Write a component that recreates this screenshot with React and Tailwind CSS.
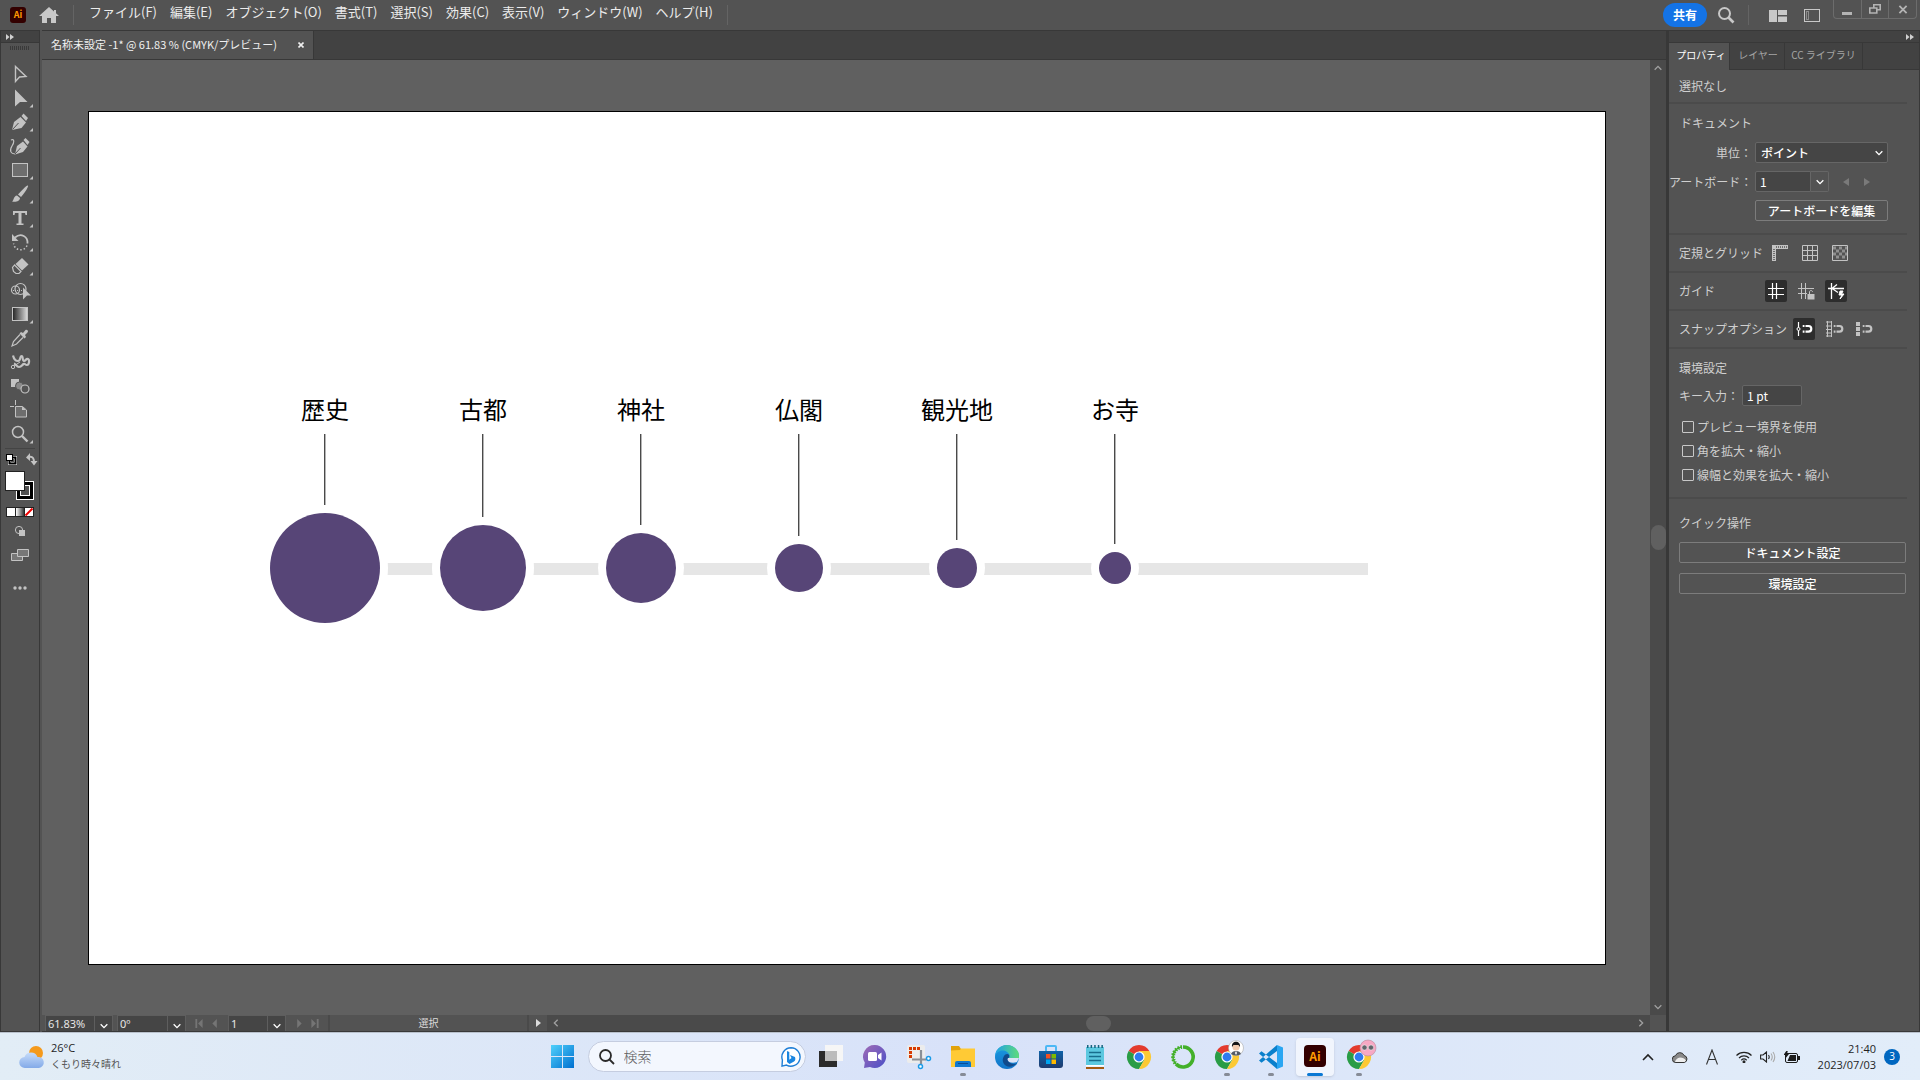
import React, { useState } from 'react';

const menus = [
  'ファイル(F)', '編集(E)', 'オブジェクト(O)', '書式(T)', '選択(S)',
  '効果(C)', '表示(V)', 'ウィンドウ(W)', 'ヘルプ(H)',
];

const nodes = [
  { label: '歴史', stem: 71, size: 110 },
  { label: '古都', stem: 83, size: 86 },
  { label: '神社', stem: 91, size: 70 },
  { label: '仏閣', stem: 102, size: 48 },
  { label: '観光地', stem: 106, size: 40 },
  { label: 'お寺', stem: 110, size: 32 },
];

const G = '#c3c3c3';

// every tool is drawn on a 40x24 cell
const tools = [
  { name: '選択', art: <path d="M15.5 4.5 26 14.5l-6.500.5-4 4.500z" fill="none" stroke={G} strokeWidth="1.400" /> },
  { name: 'ダイレクト選択', more: true, art: <path d="M15 3.500 27.500 16H20l-5 4.500z" fill={G} /> },
  {
    name: 'ペン', more: true, art: (
      <>
        <path d="M12 20 14 12l6.500-5 5.500 5.500-4.500 5.500z" fill={G} />
        <path d="m21.500 6 2-2.500 4.500 4.500-2 3z" fill={G} />
        <path d="m12.500 19.500 6-6.500" stroke="#535353" />
      </>
    ),
  },
  {
    name: '曲線', art: (
      <>
        <path d="M15 20.500 17 12l6-4.500 4.500 5-4.500 5.500z" fill={G} />
        <path d="m23.500 6 2-2 4 4-2 3z" fill={G} />
        <path d="m15 20 5.500-6" stroke="#535353" />
        <path d="M11 6c4-2 3 3 1 6-3 5-1 8 3 8" fill="none" stroke={G} strokeWidth="1.200" />
      </>
    ),
  },
  { name: '長方形', more: true, art: <rect x="12.500" y="5.500" width="15" height="13" fill="#6e6e6e" stroke={G} /> },
  {
    name: 'ブラシ', more: true, art: (
      <>
        <path d="M28 3.500c1 1-4.500 9-7 11.500l-3-2.500c2-2.500 9-10 10-9z" fill={G} />
        <path d="M17 13.500l3 2.500c0 3-4 4.500-8 3.500 2-1 1.500-5.500 5-6z" fill={G} />
      </>
    ),
  },
  { name: '文字', more: true, art: <path d="M13 5h14v4h-1.500l-.5-2h-3.500v10.500h2V19h-7v-1.500h2V7H15l-.5 2H13z" fill={G} /> },
  {
    name: '回転', more: true, art: (
      <>
        <path d="M15 7.500c6-5 13-1 12.500 6" fill="none" stroke={G} strokeWidth="1.800" />
        <path d="M12 4v7h6.500z" fill={G} />
        <path d="M27 15.500c-2 5-9 6-12.500 1l-1-3" fill="none" stroke={G} strokeWidth="1.500" strokeDasharray="1.500 2" />
      </>
    ),
  },
  {
    name: '消しゴム', more: true, art: (
      <>
        <path d="m15.500 10 6.500-6 6.500 6.500-6.500 6z" fill={G} />
        <path d="m14.500 11-2 2.500 1 4 2.500 2h3l2-2z" fill="none" stroke={G} strokeWidth="1.200" />
      </>
    ),
  },
  {
    name: 'シェイプ形成', art: (
      <>
        <circle cx="15.500" cy="12" r="4" fill="none" stroke={G} strokeWidth="1.200" />
        <circle cx="20.500" cy="11" r="5.500" fill="none" stroke={G} strokeWidth="1.200" />
        <path d="M13 12.500h9" stroke={G} strokeDasharray="1 1" />
        <path d="M23 9.500l8 8h-4l-4 4z" fill={G} />
      </>
    ),
  },
  { name: 'グラデーション', more: true, art: <rect x="12.500" y="5.500" width="15" height="13" fill="url(#grayRamp)" stroke={G} /> },
  {
    name: 'スポイト', art: (
      <>
        <path d="m21 6 2 1 2.500-3c1.500-1 3.500 1 2 2.500L25 9l1 2-1.500 1.500-5-5z" fill={G} />
        <path d="m20 8.500-6.500 7-1.500 4.500 4.500-2 6.500-6.500" fill="none" stroke={G} strokeWidth="1.200" />
      </>
    ),
  },
  {
    name: 'パペットワープ', art: (
      <>
        <path d="M13 5.500c1 4 3 5.500 5 5.500 3 0 1.500-5 3.500-5s.5 5 2.500 5 2-3 4-2 1 6-1 6-2-2-3.500-1-2 3-4.500 3-3-3-5-3.500" fill="none" stroke={G} strokeWidth="2.200" />
        <circle cx="13" cy="17" r="1.700" fill="none" stroke={G} />
        <path d="m14 16 6-4" stroke={G} />
      </>
    ),
  },
  {
    name: 'ブレンド', art: (
      <>
        <rect x="11" y="5" width="8" height="8" fill={G} />
        <circle cx="19.500" cy="12" r="4" fill="#8a8a8a" stroke="#535353" />
        <circle cx="25" cy="15" r="4" fill="#535353" stroke={G} strokeWidth="1.200" />
      </>
    ),
  },
  {
    name: 'アートボード', art: (
      <>
        <path d="M15.500 2v5M10 8.500h4" stroke={G} />
        <path d="M15.500 8.500h7l4 3.500v7h-11z" fill="#6e6e6e" stroke={G} />
        <path d="M22 8.500V12h4z" fill={G} />
      </>
    ),
  },
  {
    name: 'ズーム', more: true, art: (
      <>
        <circle cx="18" cy="10" r="5.500" fill="none" stroke={G} strokeWidth="1.500" />
        <path d="m22 14 5.500 5.500" stroke={G} strokeWidth="2.400" />
      </>
    ),
  },
];

const Tool = ({ name, art, more }) => (
  <button aria-label={name} className="h-6 w-10">
    <svg viewBox="0 0 40 24" className="h-6 w-10">
      {art}
      {more && <path d="M33 18v3.500h-3.500z" fill={G} />}
    </svg>
  </button>
);

const Chevron = ({ className, dir = 'down' }) => {
  const d = { down: 'm2 4 4 4 4-4', up: 'm2 8 4-4 4 4', left: 'M8 2 4 6l4 4', right: 'm4 2 4 4-4 4' }[dir];
  return (
    <svg viewBox="0 0 12 12" className={className} fill="none" stroke="currentColor" strokeWidth="1.600"><path d={d} /></svg>
  );
};

const DoubleArrow = () => (
  <svg viewBox="0 0 8 6" className="h-1.5 w-2" fill="#d0d0d0"><path d="m0 0 3.500 3L0 6zM4 0l4 3-4 3z" /></svg>
);

const MenuBar = () => (
  <header className="flex h-[30px] shrink-0 items-start bg-[#535353] text-[#ececec]">
    <div className="mt-[7px] ml-[10px] flex h-4 w-4 items-center justify-center rounded-[3px] bg-[#330000] text-[9px] font-bold text-[#ff9a00]">Ai</div>
    <button aria-label="ホーム" className="mt-[6px] ml-[13px]">
      <svg viewBox="0 0 20 18" className="h-[18px] w-5" fill="#c8c8c8"><path d="M10 1 0 10h3v7h5v-5h4v5h5v-7h3l-3-2.800V4h-2v1.400z" /></svg>
    </button>
    <div className="mt-[5px] ml-[14px] h-5 w-px bg-[#646464]" />
    <nav className="ml-[15px] flex gap-[13px] text-[13px] leading-6">
      {menus.map((m) => <button key={m}>{m}</button>)}
    </nav>
    <div className="mt-[5px] ml-[14px] h-5 w-px bg-[#646464]" />
    <div className="flex-1" />
    <button className="mt-[3px] h-6 w-11 rounded-full bg-[#1473e6] text-xs leading-6 font-bold text-white">共有</button>
    <button aria-label="検索" className="mt-[6px] ml-[10px]">
      <svg viewBox="0 0 18 18" className="h-[18px] w-[18px]" fill="none" stroke="#c8c8c8"><circle cx="7.500" cy="7.500" r="5.500" strokeWidth="2" /><path d="m11.500 11.500 5 5" strokeWidth="2.600" /></svg>
    </button>
    <div className="mt-[5px] ml-[13px] h-5 w-px bg-[#646464]" />
    <button aria-label="ワークスペース" className="mt-[10px] ml-5">
      <svg viewBox="0 0 18 12" className="h-3 w-[18px]" fill="#c8c8c8"><path d="M0 0h8v12H0zM9 0h9v5H9zM9 6.500h9V12H9z" /></svg>
    </button>
    <button aria-label="パネル" className="mt-[9px] ml-[17px]">
      <svg viewBox="0 0 16 13" className="h-[13px] w-4" fill="none" stroke="#c8c8c8"><rect x=".5" y=".5" width="15" height="12" /><path d="M2.500 2.500h2v8h-2z" strokeDasharray="1 1" /></svg>
    </button>
    <div className="mr-[3px] ml-[13px] flex h-[19px] w-[84px] divide-x divide-[#6c6c6c] rounded-b border border-t-0 border-[#6c6c6c]">
      <button aria-label="最小化" className="flex flex-1 items-center justify-center"><span className="mt-2 h-[3px] w-[10px] bg-[#b4b4b4]" /></button>
      <button aria-label="元に戻す" className="flex flex-1 items-center justify-center">
        <svg viewBox="0 0 12 10" className="h-[10px] w-3" fill="none" stroke="#b4b4b4" strokeWidth="1.600"><path d="M4.800 4V.8h6.400v5H8M.8 4h7v5h-7z" /></svg>
      </button>
      <button aria-label="閉じる" className="flex flex-1 items-center justify-center">
        <svg viewBox="0 0 10 10" className="h-[9px] w-[10px]" stroke="#b4b4b4" strokeWidth="2"><path d="m1 1 8 8M9 1 1 9" /></svg>
      </button>
    </div>
  </header>
);

const Toolbar = () => (
  <aside className="flex w-[40px] shrink-0 flex-col border-x border-[#383838] bg-[#535353]">
    <div className="flex h-[12px] shrink-0 items-center border-b border-[#383838] bg-[#424242] pl-[5px]"><DoubleArrow /></div>
    <svg viewBox="0 0 20 4" className="mt-[3px] ml-[9px] h-1 w-5 shrink-0"><path d="M0 2h20" stroke="#3a3a3a" strokeWidth="4" strokeDasharray="1 1" /></svg>
    <div className="mt-3 -ml-px flex flex-col">
      {tools.map((t) => <Tool key={t.name} {...t} />)}
    </div>
    <div className="mx-1 mt-[2px] h-px bg-[#444444]" />
    <svg viewBox="0 0 40 150" className="-ml-px h-[150px] w-10 shrink-0">
      <defs>
        <linearGradient id="grayRamp"><stop stopColor="#222" /><stop offset="1" stopColor="#ddd" /></linearGradient>
        <linearGradient id="whiteRamp"><stop stopColor="#fff" /><stop offset="1" stopColor="#333" /></linearGradient>
      </defs>
      <rect x="9.500" y="8.500" width="6" height="6" fill="none" stroke="#fff" strokeWidth="3" />
      <rect x="9.500" y="8.500" width="6" height="6" fill="none" stroke="#000" strokeWidth="2" />
      <rect x="6.500" y="5.500" width="6" height="6" fill="#fff" stroke="#000" />
      <path d="M29 8c4-1 5 2 5 5" fill="none" stroke={G} strokeWidth="2" />
      <path d="M26 8.500 30 4v8zM30.500 12h7L34 16.500z" fill={G} />
      <rect x="16" y="32" width="18" height="19" fill="#fff" />
      <rect x="17" y="33" width="16" height="17" fill="#000" />
      <rect x="20.500" y="36.500" width="9" height="10" fill="#535353" stroke="#fff" />
      <rect x="5.500" y="22.500" width="19" height="19" fill="#fff" stroke="#222" />
      <path d="M6 58h28v10H6z" fill="#222" />
      <path d="M7 59h8v8H7zM25 59h8v8h-8z" fill="#fff" />
      <path d="M16 59h8v8h-8z" fill="url(#whiteRamp)" />
      <path d="m25.500 66.500 7-7" stroke="#f00000" strokeWidth="2" />
      <circle cx="19" cy="81" r="3.600" fill="none" stroke={G} />
      <rect x="19" y="81" width="6" height="6" fill={G} />
      <path d="M11.500 104.500h11v7h-11z" fill="#777" stroke={G} />
      <path d="M17.500 100.500h11v7h-11z" fill="#777" stroke={G} />
      <g fill={G}><circle cx="15" cy="139" r="1.700" /><circle cx="20" cy="139" r="1.700" /><circle cx="25" cy="139" r="1.700" /></g>
    </svg>
  </aside>
);

const Artboard = () => (
  <div className="h-full w-full border border-black bg-white pt-[285px] pl-[157px]">
    <div className="relative flex w-[1122px]">
      <div className="absolute top-[166px] right-0 left-20 h-3 bg-[#e6e6e6]" />
      {nodes.map((n) => (
        <div key={n.label} className="relative flex w-[158px] flex-col items-center">
          <span className="h-[37px] text-2xl leading-6 text-black">{n.label}</span>
          <div className="w-0.5 border-x border-r-[#b4b4b4] border-l-[#4a4a4a]" style={{ height: n.stem }} />
          <div className="mt-2 rounded-full bg-[#574577] ring-8 ring-white" style={{ width: n.size, height: n.size }} />
        </div>
      ))}
    </div>
  </div>
);

const StatusField = ({ id, label, value, className }) => (
  <div className="flex bg-[#535353]">
    <label htmlFor={id} className="sr-only">{label}</label>
    <input id={id} defaultValue={value} className={`h-full border border-b-0 border-[#5e5e5e] bg-[#454545] px-0.5 font-['Noto_Sans'] text-[11px] leading-[15px] text-[#e6e6e6] ${className}`} />
    <button aria-label={`${label}一覧`} className="flex w-[18px] items-center justify-center border-t border-r border-[#5e5e5e] bg-[#454545] pt-1 text-white"><Chevron className="h-[10px] w-[10px]" /></button>
  </div>
);

const StepIcon = ({ d, label }) => (
  <button aria-label={label}><svg viewBox="0 0 8 10" className="h-[9px] w-2" fill="#757575"><path d={d} /></svg></button>
);

const StatusBar = () => (
  <div className="flex h-[17px] shrink-0 border-b border-[#383838] bg-[#4a4a4a]">
    <div className="flex gap-1 bg-[#535353] pl-[3px]">
      <StatusField id="zoom" label="ズーム" value="61.83%" className="w-[50px]" />
      <StatusField id="angle" label="回転" value="0º" className="w-[51px]" />
    </div>
    <div className="flex w-[42px] items-center justify-center gap-2 bg-[#535353]">
      <StepIcon label="先頭" d="M0 0h2v10H0zM8 0v10L3 5z" />
      <StepIcon label="前" d="M6 0v10L1 5z" />
    </div>
    <StatusField id="board" label="アートボード" value="1" className="w-10" />
    <div className="flex w-[42px] items-center justify-center gap-2 bg-[#535353]">
      <StepIcon label="次" d="M2 0v10l5-5z" />
      <StepIcon label="最後" d="M6 0h2v10H6zM0 0v10l5-5z" />
    </div>
    <div className="w-[201px] border-x-2 border-[#4a4a4a] bg-[#535353] text-center text-[10px] leading-4 text-[#dcdcdc]">選択</div>
    <button aria-label="ステータス" className="flex w-[18px] items-center justify-center bg-[#535353]"><svg viewBox="0 0 5 8" className="h-2 w-[5px]" fill="#dcdcdc"><path d="M0 0v8l5-4z" /></svg></button>
    <div className="flex flex-1 items-center text-[#a0a0a0]">
      <Chevron dir="left" className="ml-1 h-[10px] w-[10px]" />
      <div className="flex-1" />
      <div className="h-[15px] w-[25px] rounded-full bg-[#606060]" />
      <div className="flex-1" />
      <Chevron dir="right" className="mr-1 h-[10px] w-[10px]" />
    </div>
    <div className="w-4 bg-[#535353]" />
  </div>
);

const Workspace = () => (
  <main className="ml-0.5 flex min-w-0 flex-1 flex-col border-t border-[#383838]">
    <div className="flex h-[29px] shrink-0 border-b border-[#383838] bg-[#424242]">
      <div className="flex items-center border-r border-[#383838] bg-[#535353] pr-1 pb-0.5 pl-[9px] text-[11px] text-[#f0f0f0]">
        <span className="w-[242px] whitespace-nowrap">名称未設定 -1* @ 61.83 % (CMYK/プレビュー)</span>
        <button aria-label="タブを閉じる" className="w-4 pt-0.5">
          <svg viewBox="0 0 6 6" className="mx-auto h-1.5 w-1.5" stroke="#f0f0f0" strokeWidth="1.600"><path d="m.5.5 5 5M5.500.5l-5 5" /></svg>
        </button>
      </div>
    </div>
    <div className="flex min-h-0 flex-1">
      <div className="min-w-0 flex-1 bg-[#606060] pt-[51px] pr-[44px] pb-[50px] pl-[46px]"><Artboard /></div>
      <div className="flex w-4 flex-col items-center bg-[#4a4a4a] py-[3px] text-[#a0a0a0]">
        <Chevron dir="up" className="h-[10px] w-[10px]" />
        <div className="flex-1" />
        <div className="h-[25px] w-[15px] rounded-full bg-[#606060]" />
        <div className="flex-1" />
        <Chevron className="h-[10px] w-[10px]" />
      </div>
    </div>
    <StatusBar />
  </main>
);

const IconButton = ({ label, active, children }) => (
  <button aria-label={label} className={`flex h-[22px] w-[22px] items-center justify-center rounded-xs ${active ? 'bg-[#2d2d2d] text-white' : 'text-[#c3c3c3]'}`}>
    <svg viewBox="0 0 16 16" className="h-4 w-4 overflow-visible" fill="none" stroke="currentColor">{children}</svg>
  </button>
);

const Magnet = ({ x = 7 }) => (
  <path transform={`translate(${x} 0)`} d="M2 5h3a2.800 2.800 0 0 1 0 5.600H2M-.8 5H1M-.8 10.600H1" strokeWidth="2.200" />
);

const IconRow = ({ title, width, children }) => (
  <div className="mr-3 flex h-[38px] items-center border-b-2 border-[#4b4b4b] pl-[10px]">
    <h3 className={`shrink-0 ${width}`}>{title}</h3>
    <div className="flex gap-2">{children}</div>
  </div>
);

const CheckOption = ({ id, label }) => {
  const [on, setOn] = useState(false);
  return (
    <div className="flex h-6 items-center pl-[13px]">
      <input id={id} type="checkbox" checked={on} onChange={() => setOn(!on)} className="h-3 w-3 appearance-none rounded-[1px] border border-[#c8c8c8] checked:bg-[#c8c8c8]" />
      <label htmlFor={id} className="ml-[3px]">{label}</label>
    </div>
  );
};

const PropertiesPanel = () => (
  <aside className="flex w-[254px] shrink-0 flex-col border-x border-t border-b border-l-3 border-[#383838] bg-[#535353] text-xs leading-5 text-[#cfcfcf]">
    <div className="flex h-[12px] shrink-0 items-center justify-end border-b border-[#383838] bg-[#424242] pr-[5px]"><DoubleArrow /></div>
    <div role="tablist" className="flex h-[27px] shrink-0 bg-[#424242] text-[10px] text-[#a5a5a5]">
      <button role="tab" className="w-[61px] border-r border-[#383838] bg-[#535353] pb-[3px] pl-1 text-white">プロパティ</button>
      <button role="tab" className="w-[55px] border-r border-b border-[#383838] pb-0.5 pl-0.5">レイヤー</button>
      <button role="tab" className="w-[78px] border-r border-b border-[#383838] pb-0.5">CC ライブラリ</button>
      <div className="flex-1 border-b border-[#383838]" />
    </div>
    <div className="mr-3 flex h-[34px] items-center border-b-2 border-[#4b4b4b] pl-[10px]">選択なし</div>
    <div className="mr-3 h-[131px] border-b-2 border-[#4b4b4b] pt-[9px]">
      <h3 className="pl-[11px]">ドキュメント</h3>
      <div className="mt-[9px] flex h-[21px] items-center">
        <label htmlFor="unit" className="w-[86px] pr-[3px] text-right">単位：</label>
        <div className="relative flex items-center">
          <select id="unit" className="h-[21px] w-[133px] appearance-none rounded-xs border border-[#666666] bg-[#454545] pl-[5px] text-xs leading-[19px] font-medium text-white"><option>ポイント</option></select>
          <Chevron className="pointer-events-none absolute right-1 h-[10px] w-[10px] text-white" />
        </div>
      </div>
      <div className="mt-2 flex h-[21px] items-center">
        <label htmlFor="artboard" className="w-[86px] whitespace-nowrap">アートボード：</label>
        <input id="artboard" defaultValue="1" className="h-[21px] w-[56px] rounded-l-xs border border-[#666666] bg-[#454545] pl-1 text-white" />
        <button aria-label="アートボード選択" className="flex h-[21px] w-[18px] items-center justify-center rounded-r-xs border border-l-0 border-[#666666] text-white"><Chevron className="h-[10px] w-[10px]" /></button>
        <button aria-label="前へ" className="ml-[14px]"><svg viewBox="0 0 6 8" className="h-2 w-1.5" fill="#7a7a7a"><path d="M6 0v8L0 4z" /></svg></button>
        <button aria-label="次へ" className="ml-[15px]"><svg viewBox="0 0 6 8" className="h-2 w-1.5" fill="#7a7a7a"><path d="M0 0v8l6-4z" /></svg></button>
      </div>
      <button className="mt-2 ml-[86px] h-[21px] w-[133px] rounded-xs border border-[#7c7c7c] leading-[19px] font-medium text-white">アートボードを編集</button>
    </div>
    <IconRow title="定規とグリッド" width="w-[90px]">
      <IconButton label="定規">
        <path d="M0 2h16M2 0v16" strokeWidth="4" />
        <path d="M4 2h11M2 4v11" stroke="#535353" strokeWidth="1.500" strokeDasharray="1 1" />
      </IconButton>
      <IconButton label="グリッド"><path d="M.5.5h15v15H.5zM5.500 0v16M10.500 0v16M0 5.500h16M0 10.500h16" /></IconButton>
      <IconButton label="透明グリッド">
        <path d="M.5.5h15v15H.5z" />
        <path d="M1 3h14M1 9h14M4 6h11M4 12h11" stroke="#909090" strokeWidth="3" strokeDasharray="3 3" />
      </IconButton>
    </IconRow>
    <IconRow title="ガイド" width="w-[86px]">
      <IconButton label="ガイドを表示" active><path d="M4.500 0v16M8.500 0v16M0 5.500h16M0 11.500h16" strokeWidth="1.200" /></IconButton>
      <IconButton label="ガイドをロック">
        <path d="M3.500 0v16M7.500 0v16M0 5.500h16M0 10.500h9" />
        <path d="M9.500 11h7v5.500h-7z" fill="currentColor" stroke="none" />
        <path d="M11.500 11V9c0-2 3-2 3 0" />
      </IconButton>
      <IconButton label="スマートガイド" active>
        <path d="M3.500 0v16M0 5.500h16M4 5.500l5-4M4 5.500l6 4" strokeWidth="1.300" />
        <path d="m12 8-1 4h3l-2 4 4-5h-2.500L15 8z" fill="currentColor" />
      </IconButton>
    </IconRow>
    <IconRow title="スナップオプション" width="w-[114px] whitespace-nowrap">
      <IconButton label="ポイントにスナップ" active>
        <path d="M2.500 1v14" strokeWidth="1.200" /><circle cx="2.500" cy="8" r="1.500" fill="#2d2d2d" /><Magnet x={7.500} />
      </IconButton>
      <IconButton label="グリッドにスナップ"><path d="M1.500 0v16M5.500 0v16M0 1h6M0 5h6M0 8.500h6M0 12h6M0 15h6" /><Magnet x={8.500} /></IconButton>
      <IconButton label="ピクセルにスナップ"><path d="M2 1v14" strokeWidth="4" strokeDasharray="4 1" /><Magnet x={7.500} /></IconButton>
    </IconRow>
    <div className="mr-3 h-[150px] border-b-2 border-[#4b4b4b] pt-[9px] pl-[10px]">
      <h3>環境設定</h3>
      <div className="mt-[7px] flex h-[21px] items-center">
        <label htmlFor="key" className="w-[63px] whitespace-nowrap">キー入力：</label>
        <input id="key" defaultValue="1 pt" className="h-[21px] w-[60px] rounded-xs border border-[#666666] bg-[#454545] pl-1 text-white" />
      </div>
      <div className="mt-[9px] -ml-[10px]">
        <CheckOption id="preview" label="プレビュー境界を使用" />
        <CheckOption id="corner" label="角を拡大・縮小" />
        <CheckOption id="line" label="線幅と効果を拡大・縮小" />
      </div>
    </div>
    <div className="flex flex-col pt-[14px] pr-[13px] pl-[10px]">
      <h3>クイック操作</h3>
      <button className="mt-[9px] h-[21px] rounded-xs border border-[#7c7c7c] leading-[19px] font-medium text-white">ドキュメント設定</button>
      <button className="mt-[10px] h-[21px] rounded-xs border border-[#7c7c7c] leading-[19px] font-medium text-white">環境設定</button>
    </div>
  </aside>
);

const Chrome = ({ children }) => (
  <>
    <path d="M12 12 1.600 6A12 12 0 0 1 22.400 6z" fill="#e33b2e" />
    <path d="M12 12 1.600 6A12 12 0 0 0 12 24l5.200-9z" fill="#2a9c46" />
    <path d="M12 12V6h10.400A12 12 0 0 1 12 24l5.200-9z" fill="#fcc934" />
    <circle cx="12" cy="12" r="5.600" fill="#fff" />
    <circle cx="12" cy="12" r="4.400" fill="#2f7bf0" />
    {children}
  </>
);

const apps = [
  {
    name: 'タスクビュー', art: (
      <><path d="M0 6h18v16H0z" fill="#2b2b2b" /><path d="M6 0h18v16H6z" fill="#f6f6f6" /><path d="M6 6h12v10H6z" fill="#bcbcbc" /></>
    ),
  },
  {
    name: 'チャット', art: (
      <>
        <path d="M12 0a11.500 11.500 0 1 1-5 22l-6 1 .8-5.500A11.500 11.500 0 0 1 12 0z" fill="url(#chat)" />
        <rect x="5" y="7" width="9" height="9" rx="1.500" fill="#fff" /><path d="m15 10 3.500-2.500v8L15 13z" fill="#fff" />
      </>
    ),
  },
  {
    name: 'Snipping Tool', art: (
      <>
        <rect width="18" height="18" rx="2" y="0" fill="#ececec" />
        <path d="M3.500 13V3.500H14" fill="none" stroke="#d83b01" strokeWidth="3" strokeDasharray="3 1" />
        <path d="M14 5v14M5 14.500h14" stroke="#8a8f96" strokeWidth="2.200" />
        <circle cx="13.500" cy="21.500" r="2" fill="#fff" stroke="#1a9be8" strokeWidth="1.500" /><circle cx="21.500" cy="13.500" r="2" fill="#fff" stroke="#1a9be8" strokeWidth="1.500" />
      </>
    ),
  },
  {
    name: 'エクスプローラー', running: true, art: (
      <>
        <path d="M0 1h8l2 3h14v9H0z" fill="#e2a30b" /><path d="M0 5.500 9 5l1-1.500h14V22H0z" fill="#ffca35" />
        <path d="M4 22v-4q0-2 2-2h12q2 0 2 2v4z" fill="#0f78d0" /><path d="M7 18.500h10" stroke="#0a4c93" />
      </>
    ),
  },
  {
    name: 'Edge', art: (
      <>
        <circle cx="12" cy="12" r="12" fill="url(#edge)" />
        <path d="M0 12C1 6 8 4 12 7c3 2 3 4 2 6h10c0-3 0-6-2-8C19 1 14 0 12 0 5 0 0 5 0 12z" fill="url(#edgeTop)" />
        <path d="M9 11c-4 6 2 13 9 10l5-3c-4 2-9 1-10-3-.5-2 2-2 1-5-1-2-4-1-5 1z" fill="#114a8b" />
        <path d="M13 13c-2 4 4 6 9 4l2-4z" fill="#dbe3f6" />
      </>
    ),
  },
  {
    name: 'Microsoft Store', art: (
      <>
        <path d="M7 6V2q0-1 1-1h8q1 0 1 1v4" fill="none" stroke="#4db8f5" strokeWidth="2" />
        <path d="M0 6h24v14q0 3-3 3H3q-3 0-3-3z" fill="url(#store)" />
        <path d="M7 9h4.500v4.500H7z" fill="#f25022" /><path d="M12.500 9H17v4.500h-4.500z" fill="#7fba00" />
        <path d="M7 14.500h4.500V19H7z" fill="#00a4ef" /><path d="M12.500 14.500H17V19h-4.500z" fill="#ffb900" />
      </>
    ),
  },
  {
    name: 'メモ帳', art: (
      <>
        <path d="M3 2h18v18H3z" fill="#5cc8e0" /><path d="M4 1.500h16" stroke="#17647f" strokeWidth="3" strokeDasharray="1.500 2.100" />
        <path d="M6 7.500h12M6 11.500h12M6 15.500h12" stroke="#176d8d" strokeWidth="1.400" />
        <path d="M3 20h18v1.500H3z" fill="#fff" /><path d="M3 22h18v2H3z" fill="#a45a12" />
      </>
    ),
  },
  { name: 'Chrome', art: <Chrome /> },
  {
    name: 'Anaconda', art: (
      <>
        <path d="M12 2a10 10 0 1 1-7 17" fill="none" stroke="#43b02a" strokeWidth="3.600" />
        <path d="M11 2A10 10 0 0 0 5 19" fill="none" stroke="#43b02a" strokeWidth="1.600" />
        <path d="M11 2A10 10 0 0 0 5 19" fill="none" stroke="#43b02a" strokeWidth="3.800" strokeDasharray="1.500 1.300" />
      </>
    ),
  },
  {
    name: 'Chrome 1', running: true, art: (
      <Chrome>
        <circle cx="21" cy="3" r="7.500" fill="#fff" stroke="#aaa" strokeWidth=".6" />
        <circle cx="21" cy="2" r="3.600" fill="#f0c9ac" /><path d="M17 2c-1-7 9-7 8 0l-1.500-2h-5z" fill="#151515" />
        <path d="M16 9q1-3 5-3t5 3q-5 3-10 0z" fill="#555b66" /><path d="m21 6-1 2 1 2 1-2z" fill="#fff" />
      </Chrome>
    ),
  },
  {
    name: 'Visual Studio Code', running: true, art: (
      <>
        <path d="m0 8.500 2.500-2.300L18 18v6zM0 15.500l2.500 2.300L18 6V0z" fill="#0a80cc" />
        <path d="m18 0 6 2.500v19L18 24z" fill="#2aa6f2" />
      </>
    ),
  },
  {
    name: 'Illustrator', running: true, active: true, art: (
      <>
        <rect x="1" y="0" width="22" height="22" rx="4" fill="#330000" />
        <text x="12" y="15.500" textAnchor="middle" fontSize="12" fontWeight="700" fill="#ff9a00">Ai</text>
      </>
    ),
  },
  {
    name: 'Chrome 2', running: true, art: (
      <Chrome>
        <circle cx="21" cy="3" r="8" fill="#f7a8c4" stroke="#b98a9c" strokeWidth=".6" />
        <circle cx="17.500" cy="2.500" r="2.600" fill="#62656c" stroke="#eee" strokeWidth=".6" /><circle cx="24" cy="2.500" r="2.600" fill="#62656c" stroke="#eee" strokeWidth=".6" />
      </Chrome>
    ),
  },
];

const TaskbarApp = ({ name, art, running, active }) => (
  <button aria-label={name} className="flex h-[47px] w-11 items-center justify-center">
    <span className={`relative flex h-[38px] w-[38px] items-center justify-center rounded ${active ? 'bg-white/60 shadow-sm' : ''}`}>
      <svg viewBox="0 0 24 24" className="h-6 w-6 overflow-visible">{art}</svg>
      {running && <span className={`absolute bottom-0 h-[3px] rounded-full ${active ? 'w-4 bg-[#0a78d4]' : 'w-1.5 bg-[#868b96]'}`} />}
    </span>
  </button>
);

const Taskbar = () => (
  <footer className="relative flex h-12 shrink-0 items-center justify-center border-t border-[#b9c1cc] bg-linear-to-r from-[#e2edf6] via-[#d8e2f9] to-[#e2edf9] text-[#1f1f1f]">
    <svg className="absolute h-0 w-0">
      <defs>
        <linearGradient id="chat" x2="1" y2="1"><stop stopColor="#a06bb5" /><stop offset="1" stopColor="#4a50c8" /></linearGradient>
        <linearGradient id="edge" x2="0" y2="1"><stop stopColor="#1b9de2" /><stop offset="1" stopColor="#1173c8" /></linearGradient>
        <linearGradient id="edgeTop"><stop stopColor="#1fa0e8" /><stop offset="1" stopColor="#5fdc7a" /></linearGradient>
        <linearGradient id="store" x2="0" y2="1"><stop stopColor="#0f62a8" /><stop offset="1" stopColor="#1f3b6e" /></linearGradient>
        <linearGradient id="win" x2="1" y2="1"><stop stopColor="#4fd0fb" /><stop offset="1" stopColor="#0070d0" /></linearGradient>
        <linearGradient id="cloud" x2="0" y2="1"><stop stopColor="#c6dcfa" /><stop offset="1" stopColor="#83aae8" /></linearGradient>
      </defs>
    </svg>
    <div className="flex flex-1 items-center pl-[19px]">
      <svg viewBox="0 0 26 24" className="h-6 w-[26px]">
        <circle cx="17" cy="8" r="7" fill="#f59a1c" />
        <path d="M6 23a5.500 5.500 0 0 1-.5-11 7 7 0 0 1 13 0A5.500 5.500 0 0 1 20 23z" fill="url(#cloud)" />
      </svg>
      <div className="ml-[6px] pb-0.5 text-[11px] leading-4">
        <div className="font-['Open_Sans']">26°C</div>
        <div className="text-[10px] text-[#555555]">くもり時々晴れ</div>
      </div>
    </div>
    <div className="flex items-center pl-0.5">
      <button aria-label="スタート" className="flex h-[47px] w-11 items-center justify-center">
        <svg viewBox="0 0 23 23" className="h-[23px] w-[23px]" fill="url(#win)"><path d="M0 0h11v11H0zM12 0h11v11H12zM0 12h11v11H0zM12 12h11v11H12z" /></svg>
      </button>
      <div className="mx-[3px] flex h-[31px] w-[218px] items-center rounded-full border border-[#c5cde0] bg-[#f3f7fe] pr-1 pl-[10px]">
        <svg viewBox="0 0 16 16" className="h-4 w-4 shrink-0" fill="none" stroke="#2a2a2a" strokeWidth="1.800"><circle cx="6.500" cy="6.500" r="5.500" /><path d="m10.500 10.500 4.500 4.500" /></svg>
        <label htmlFor="search" className="sr-only">検索</label>
        <input id="search" placeholder="検索" className="ml-[9px] w-0 flex-1 pb-0.5 text-sm font-light placeholder:text-[#5c5c5c]" />
        <svg viewBox="0 0 20 20" className="h-5 w-5 shrink-0">
          <path d="M10 .8a9.200 9.200 0 1 1-4.500 17.300l-4.500 1 .4-6A9.200 9.200 0 0 1 10 .8z" fill="#fff" stroke="#1f7fd6" strokeWidth="1.400" />
          <path d="m6 4 2.300 1v7.800L10.500 11 9 8l5 2q1 3-1 4.500L8.500 17 6 15z" fill="#1b86e0" />
        </svg>
      </div>
      {apps.map((a) => <TaskbarApp key={a.name} {...a} />)}
    </div>
    <div className="flex flex-1 items-center justify-end pr-5">
      <button aria-label="隠れているアイコン" className="flex w-8 justify-center">
        <svg viewBox="0 0 12 8" className="h-2 w-3" fill="none" stroke="#222" strokeWidth="1.600"><path d="m1 7 5-5 5 5" /></svg>
      </button>
      <div className="flex w-8 justify-center">
        <svg viewBox="0 0 16 12" className="h-3 w-4"><path d="M4 11.500a3.400 3.400 0 0 1-.5-6.800 4.600 4.600 0 0 1 8.600-.2 3.600 3.600 0 0 1 .2 7z" fill="#8a8a8a" stroke="#333" /><path d="M3 11q1-4 5-4.500 4 0 6 3l-1.500 1.500z" fill="#eeeeee" /></svg>
      </div>
      <div className="flex w-8 justify-center">
        <svg viewBox="0 0 12 16" className="h-4 w-3" fill="none" stroke="#333" strokeWidth="1.100"><path d="M.5 15.500 6 1l5.500 14.500M2.500 10.500h7" /></svg>
      </div>
      <div className="ml-1 flex w-6 justify-center">
        <svg viewBox="0 0 16 12" className="h-3 w-4" fill="none" stroke="#222" strokeWidth="1.200"><path d="M.5 4.500a10.500 10.500 0 0 1 15 0M3 7a7 7 0 0 1 10 0M5.300 9.200a4 4 0 0 1 5.400 0" /><circle cx="8" cy="10.800" r=".9" fill="#222" /></svg>
      </div>
      <div className="flex w-6 justify-center">
        <svg viewBox="0 0 16 12" className="h-3 w-4" fill="none" stroke="#222" strokeWidth="1.100"><path d="M.6 4H3l3.500-3v10L3 8H.6zM8.500 4q1.400 2 0 4" /><path d="M11 2.500q2.500 3.500 0 7M13 1q3.500 5 0 10" stroke="#aaa" /></svg>
      </div>
      <div className="flex w-6 justify-center">
        <svg viewBox="0 0 16 12" className="h-3 w-4"><rect x="1.500" y="2.500" width="12" height="9" rx="1.500" fill="none" stroke="#1c1c1c" /><path d="M3.500 10 6 4h6v6zM14 5h2v4h-2z" fill="#1c1c1c" /><path d="M3-1-.5 4h2L1 8l4-5H3l1-4z" fill="#1c1c1c" /></svg>
      </div>
      <div className="w-[72px] text-right font-['Open_Sans'] text-[11px] leading-4">
        <div>21:40</div>
        <div>2023/07/03</div>
      </div>
      <div className="ml-[8px] flex h-4 w-4 items-center justify-center rounded-full bg-[#0067c0] font-['Open_Sans'] text-[10px] text-white">3</div>
    </div>
  </footer>
);

const App = () => (
  <div className="flex h-screen flex-col overflow-hidden bg-[#535353] font-['Noto_Sans_CJK_JP',sans-serif]">
    <MenuBar />
    <div className="flex min-h-0 flex-1">
      <div className="flex border-t border-b border-[#383838]"><Toolbar /></div>
      <Workspace />
      <PropertiesPanel />
    </div>
    <Taskbar />
  </div>
);

export default App;
